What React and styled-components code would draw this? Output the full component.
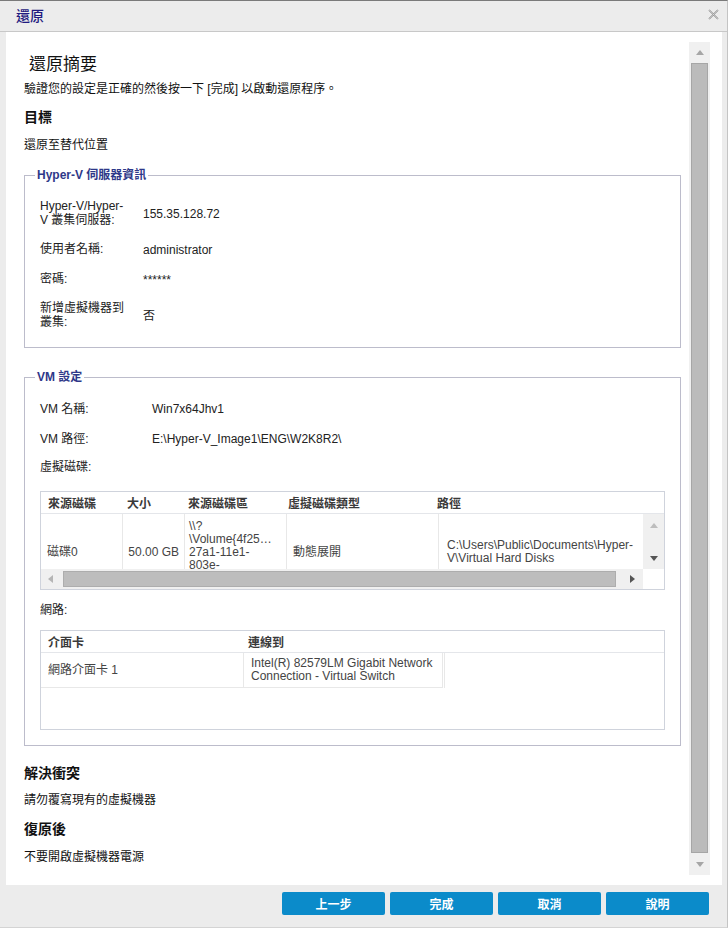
import React from 'react';
import styled, { createGlobalStyle } from 'styled-components';

const FONT = `"Liberation Sans", "Noto Sans CJK TC", sans-serif`;

const GlobalStyle = createGlobalStyle`
  html, body {
    margin: 0;
    padding: 0;
    background: #ececec;
  }
  body {
    font-family: ${FONT};
    font-size: 12px;
    color: #222;
  }
`;

const Window = styled.div`
  height: 928px;
  box-sizing: border-box;
  display: flex;
  flex-direction: column;
  background: #ececec;
  border-top: 1px solid #7a7a7a;
  border-right: 1px solid #c4c4c4;
  border-bottom: 1px solid #d4d4d4;
  padding: 0 5px 0 6px;
`;

const TitleBar = styled.div`
  height: 30px;
  flex: none;
  display: flex;
  align-items: center;
  margin: 0 -5px 0 -6px;
  padding: 0 8px 0 16px;
  border-bottom: 1px solid #c8c8c8;
  font-size: 14px;
  line-height: 18px;
  font-weight: 500;
  color: #1f1a80;
`;

const Close = styled.svg`
  margin-left: auto;
  margin-top: -4px;
`;

const Body = styled.div`
  flex: 1;
  display: flex;
  background: #fff;
  min-height: 0;
`;

const Content = styled.div`
  flex: 1;
  min-width: 0;
  overflow: hidden;
  padding: 22px 8px 0 18px;
`;

const Heading = styled.h1`
  margin: 0 0 0 5px;
  font-size: 17px;
  line-height: 22px;
  font-weight: normal;
  color: #111;
`;

const Text = styled.div`
  margin-top: ${(p) => p.$mt || 0}px;
  font-size: 12px;
  line-height: 16px;
  color: #111;
`;

const SectionTitle = styled.div`
  margin-top: ${(p) => p.$mt || 0}px;
  font-size: 14px;
  line-height: 18px;
  font-weight: bold;
  color: #111;
`;

const Fieldset = styled.fieldset`
  margin: ${(p) => p.$mt}px 0 0;
  padding: ${(p) => p.$pt}px 15px ${(p) => p.$pb}px;
  border: 1px solid #bcbccb;
  min-width: 0;
`;

const Legend = styled.legend`
  margin-left: -5px;
  padding: 0 2px;
  font-size: 12px;
  line-height: 16px;
  font-weight: bold;
  color: #2e3889;
`;

const InfoGrid = styled.div`
  display: grid;
  grid-template-columns: ${(p) => p.$label}px 1fr;
  row-gap: ${(p) => p.$gap}px;
  align-items: center;
`;

const Label = styled.div`
  max-width: 86px;
  margin-top: ${(p) => p.$mt || 0}px;
  font-size: 12px;
  line-height: 14px;
  color: #222;
`;

const Value = styled.div`
  font-size: 12px;
  line-height: 14px;
  color: #222;
  padding-top: ${(p) => (p.$flat ? 0 : 2)}px;
`;

const TableWrap = styled.div`
  margin-top: ${(p) => p.$mt}px;
  border: 1px solid #cfd3dc;
  height: ${(p) => p.$h}px;
  box-sizing: border-box;
  overflow: hidden;
`;

const HeadRow = styled.div`
  display: grid;
  grid-template-columns: ${(p) => p.$cols};
  height: 21px;
  align-items: center;
  border-bottom: 1px solid #e4e6ea;
`;

const HeadCell = styled.div`
  padding-left: ${(p) => p.$pad || 0}px;
  font-size: 12px;
  font-weight: bold;
  color: #3a3a3a;
  white-space: nowrap;
`;

const DiskBody = styled.div`
  display: grid;
  grid-template-columns: 1fr 21px;
  height: 55px;
`;

const Viewport = styled.div`
  overflow: hidden;
`;

const DataRow = styled.div`
  display: grid;
  grid-template-columns: ${(p) => p.$cols};
  height: ${(p) => p.$h}px;
`;

const Cell = styled.div`
  display: flex;
  align-items: center;
  justify-content: ${(p) => (p.$right ? 'flex-end' : 'flex-start')};
  padding: 0 ${(p) => (p.$right ? 5 : 0)}px 0 ${(p) => p.$pad || 0}px;
  border-right: ${(p) => (p.$noLine ? 'none' : '1px solid #e8e8e8')};
  border-bottom: ${(p) => (p.$under ? '1px solid #e8e8e8' : 'none')};
  font-size: 12px;
  line-height: 13px;
  color: #444;
  white-space: nowrap;
`;

const VScroll = styled.div`
  background: #f0f0f0;
  display: flex;
  flex-direction: column;
  align-items: center;
  justify-content: space-between;
  padding: 9px 0 8px;
`;

const HScroll = styled.div`
  display: grid;
  grid-template-columns: 1fr 21px;
  height: 20px;
`;

const HTrack = styled.div`
  display: flex;
  align-items: center;
  background: #f0f0f0;
  padding: 0 8px 0 7px;
`;

const HThumb = styled.div`
  flex: 1;
  height: 16px;
  margin: 0 14px 0 10px;
  background: #bdbdbd;
  border: 1px solid #adadad;
  box-sizing: border-box;
`;

const Arrow = styled.span`
  width: 0;
  height: 0;
  border-style: solid;
  ${(p) =>
    p.$dir === 'up' &&
    `border-width: 0 4px 5px 4px; border-color: transparent transparent ${p.$c} transparent;`}
  ${(p) =>
    p.$dir === 'down' &&
    `border-width: 5px 4px 0 4px; border-color: ${p.$c} transparent transparent transparent;`}
  ${(p) =>
    p.$dir === 'left' &&
    `border-width: 4px 5px 4px 0; border-color: transparent ${p.$c} transparent transparent;`}
  ${(p) =>
    p.$dir === 'right' &&
    `border-width: 4px 0 4px 5px; border-color: transparent transparent transparent ${p.$c};`}
`;

const MainScroll = styled.div`
  width: 21px;
  margin: 10px 12px 10px 0;
  background: #f0f0f0;
  display: flex;
  flex-direction: column;
  align-items: center;
`;

const ArrowBox = styled.div`
  height: ${(p) => p.$h}px;
  display: flex;
  align-items: center;
  justify-content: center;
`;

const Thumb = styled.div`
  flex: 1;
  width: 17px;
  box-sizing: border-box;
  background: #bbbbbb;
  border: 1px solid #a6a6a6;
`;

const Footer = styled.div`
  height: 42px;
  flex: none;
  display: flex;
  justify-content: flex-end;
  gap: 5px;
  padding: 7px 13px 0 0;
  box-sizing: border-box;
`;

const Button = styled.button`
  width: 103px;
  height: 23px;
  border: none;
  border-radius: 2px;
  background: #0b8bca;
  color: #fff;
  font-family: ${FONT};
  font-size: 12px;
  font-weight: bold;
  cursor: pointer;
`;

const diskCols = '82px 62px 102px 152px 204px';
const diskHead = [
  { t: '來源磁碟', w: 86, pad: 7 },
  { t: '大小', w: 61 },
  { t: '來源磁碟區', w: 100 },
  { t: '虛擬磁碟類型', w: 149 },
  { t: '路徑', w: 0 },
];

const serverInfo = [
  ['Hyper-V/Hyper-V 叢集伺服器:', '155.35.128.72'],
  ['使用者名稱:', 'administrator'],
  ['密碼:', '******'],
  ['新增虛擬機器到叢集:', '否'],
];

const vmInfo = [
  ['VM 名稱:', 'Win7x64Jhv1'],
  ['VM 路徑:', 'E:\\Hyper-V_Image1\\ENG\\W2K8R2\\'],
];

const App = () => {
  return (
    <>
      <GlobalStyle />
      <Window>
        <TitleBar>
          還原
          <Close width="11" height="11" viewBox="0 0 11 11">
            <path d="M1 1 L10 10 M10 1 L1 10" stroke="#8a8a8a" strokeWidth="1.6" fill="none" />
            <path d="M1 1 L10 10 M10 1 L1 10" stroke="#f2f2f2" strokeWidth="0.5" fill="none" />
          </Close>
        </TitleBar>
        <Body>
          <Content>
            <Heading>還原摘要</Heading>
            <Text $mt={5}>驗證您的設定是正確的然後按一下 [完成] 以啟動還原程序。</Text>
            <SectionTitle $mt={11}>目標</SectionTitle>
            <Text $mt={11}>還原至替代位置</Text>

            <Fieldset $mt={14} $pt={16} $pb={18}>
              <Legend>Hyper-V 伺服器資訊</Legend>
              <InfoGrid $label={103} $gap={14}>
                {serverInfo.map(([label, value]) => (
                  <React.Fragment key={label}>
                    <Label>{label}</Label>
                    <Value>{value}</Value>
                  </React.Fragment>
                ))}
              </InfoGrid>
            </Fieldset>

            <Fieldset $mt={21} $pt={17} $pb={15}>
              <Legend>VM 設定</Legend>
              <InfoGrid $label={112} $gap={16}>
                {vmInfo.map(([label, value]) => (
                  <React.Fragment key={label}>
                    <Label>{label}</Label>
                    <Value $flat>{value}</Value>
                  </React.Fragment>
                ))}
              </InfoGrid>
              <Label $mt={14}>虛擬磁碟:</Label>

              <TableWrap $mt={17} $h={99}>
                <HeadRow $cols={diskHead.map((c) => (c.w ? c.w + 'px' : '1fr')).join(' ')}>
                  {diskHead.map((c) => (
                    <HeadCell key={c.t} $pad={c.pad}>
                      {c.t}
                    </HeadCell>
                  ))}
                </HeadRow>
                <DiskBody>
                  <Viewport>
                    <DataRow $cols={diskCols} $h={76}>
                      <Cell $pad={6}>磁碟0</Cell>
                      <Cell $right>50.00 GB</Cell>
                      <Cell $pad={4}>
                        <div>
                          \\?
                          <br />
                          \Volume{'{'}4f25…
                          <br />
                          27a1-11e1-
                          <br />
                          803e-
                          <br />
                          806e6f6e6963{'}'}\
                        </div>
                      </Cell>
                      <Cell $pad={6}>動態展開</Cell>
                      <Cell $pad={8} $noLine>
                        <div>
                          C:\Users\Public\Documents\Hyper-
                          <br />
                          V\Virtual Hard Disks
                        </div>
                      </Cell>
                    </DataRow>
                  </Viewport>
                  <VScroll>
                    <Arrow $dir="up" $c="#bdbdbd" />
                    <Arrow $dir="down" $c="#555" />
                  </VScroll>
                </DiskBody>
                <HScroll>
                  <HTrack>
                    <Arrow $dir="left" $c="#b5b5b5" />
                    <HThumb />
                    <Arrow $dir="right" $c="#555" />
                  </HTrack>
                  <div />
                </HScroll>
              </TableWrap>

              <Label $mt={13}>網路:</Label>
              <TableWrap $mt={13} $h={100}>
                <HeadRow $cols="203px 1fr">
                  <HeadCell $pad={7}>介面卡</HeadCell>
                  <HeadCell $pad={4}>連線到</HeadCell>
                </HeadRow>
                <DataRow $cols="203px 199px 2px 1fr" $h={35}>
                  <Cell $pad={7} $under>
                    網路介面卡 1
                  </Cell>
                  <Cell $pad={7} $under>
                    <div>
                      Intel(R) 82579LM Gigabit Network
                      <br />
                      Connection - Virtual Switch
                    </div>
                  </Cell>
                  <Cell />
                  <Cell $noLine />
                </DataRow>
              </TableWrap>
            </Fieldset>

            <SectionTitle $mt={18}>解決衝突</SectionTitle>
            <Text $mt={10}>請勿覆寫現有的虛擬機器</Text>
            <SectionTitle $mt={12}>復原後</SectionTitle>
            <Text $mt={11}>不要開啟虛擬機器電源</Text>
          </Content>
          <MainScroll>
            <ArrowBox $h={21}>
              <Arrow $dir="up" $c="#a6a6a6" />
            </ArrowBox>
            <Thumb />
            <ArrowBox $h={22}>
              <Arrow $dir="down" $c="#a6a6a6" />
            </ArrowBox>
          </MainScroll>
        </Body>
        <Footer>
          <Button>上一步</Button>
          <Button>完成</Button>
          <Button>取消</Button>
          <Button>說明</Button>
        </Footer>
      </Window>
    </>
  );
};

export default App;
